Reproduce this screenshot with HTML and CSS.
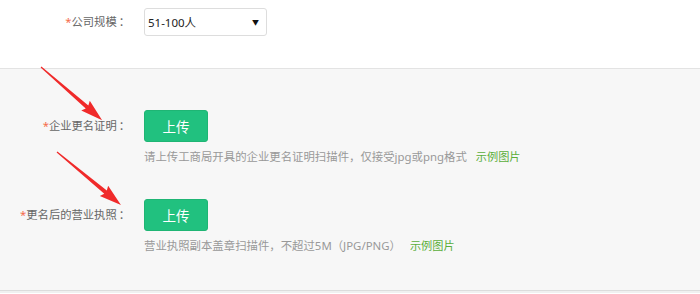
FILE: index.html
```html
<!DOCTYPE html>
<html lang="zh-CN">
<head>
    <meta charset="UTF-8">
    <title>企业更名</title>
    <link rel="stylesheet" href="styles.css">
</head>
<body>
    <div class="section top">
        <div class="form-row">
            <label class="form-label"><span class="req">*</span>公司规模<span class="colon">：</span></label>
            <div class="form-field">
                <div class="select-box">
                    <span>51-100人</span>
                    <span class="caret">&#9660;</span>
                </div>
            </div>
        </div>
    </div>

    <div class="section gray">
        <div class="form-row">
            <label class="form-label"><span class="req">*</span>企业更名证明<span class="colon">：</span></label>
            <div class="form-field">
                <button class="upload-btn">上传</button>
                <p class="hint">请上传工商局开具的企业更名证明扫描件，仅接受jpg或png格式<a href="#" class="sample">示例图片</a></p>
            </div>
        </div>
        <div class="form-row">
            <label class="form-label"><span class="req">*</span>更名后的营业执照<span class="colon">：</span></label>
            <div class="form-field">
                <button class="upload-btn">上传</button>
                <p class="hint">营业执照副本盖章扫描件，不超过5M（JPG/PNG）<a href="#" class="sample">示例图片</a></p>
            </div>
        </div>
    </div>
    <div class="bottom"></div>

    <!-- annotation arrows drawn over the form -->
    <svg class="arrows" width="700" height="294" viewBox="0 0 700 294">
        <g transform="translate(41 67) rotate(41)">
            <polygon points="0,-0.6 61,-2 59,-6.5 81,0 59,6.5 61,2 0,0.6" />
        </g>
        <g transform="translate(57 152) rotate(39.6)">
            <polygon points="0,-0.6 63,-2 61,-6.5 83,0 61,6.5 63,2 0,0.6" />
        </g>
    </svg>
</body>
</html>
```

FILE: styles.css
```css
body {
    margin: 0;
    font-family: "Noto Sans", "Noto Sans CJK SC", sans-serif;
    color: #666;
    background: #fff;
    position: relative;
    height: 294px;
    overflow: hidden;
}
.section {
    width: 700px;
}
.top {
    padding-top: 8px;
    height: 60px;
    border-bottom: 1px solid #e3e3e3;
}
.gray {
    background-color: #f7f7f7;
    padding: 41px 0 37px;
    border-bottom: 1px solid #dcdcdc;
}
.bottom {
    height: 2px;
    background: #f0f0f0;
}
.form-row {
    display: flex;
    margin-bottom: 35px;
}
.form-row:last-child {
    margin-bottom: 0;
}
.form-label {
    width: 130px;
    padding-right: 14px;
    text-align: right;
    font-size: 11.3px;
    line-height: 31px;
    color: #666;
}
.colon {
    padding-left: 2px;
}
.top .form-label {
    line-height: 28px;
}
.req {
    color: #f56c4b;
}
.form-field {
    display: flex;
    flex-direction: column;
    align-items: flex-start;
}
.select-box {
    height: 26px;
    border: 1px solid #ddd;
    border-radius: 3px;
    background: #fff;
    display: flex;
    align-items: center;
    justify-content: space-between;
    padding: 0 7px 0 3px;
    width: 111px;
    font-size: 11.5px;
    color: #222;
}
.caret {
    font-size: 7px;
    color: #111;
}
.upload-btn {
    width: 64px;
    height: 32px;
    border: 1px solid #1fb574;
    border-radius: 3px;
    background-color: #21c17f;
    color: #fff;
    font-family: inherit;
    font-size: 13.5px;
    padding: 0;
}
.hint {
    margin: 8px 0 0;
    font-size: 11.4px;
    line-height: 14px;
    color: #999;
}
.sample {
    margin-left: 9px;
    color: #5aae3a;
    font-size: 11.2px;
    text-decoration: none;
}
.arrows {
    position: absolute;
    left: 0;
    top: 0;
    pointer-events: none;
}
.arrows polygon {
    fill: #f02a2a;
}
```
